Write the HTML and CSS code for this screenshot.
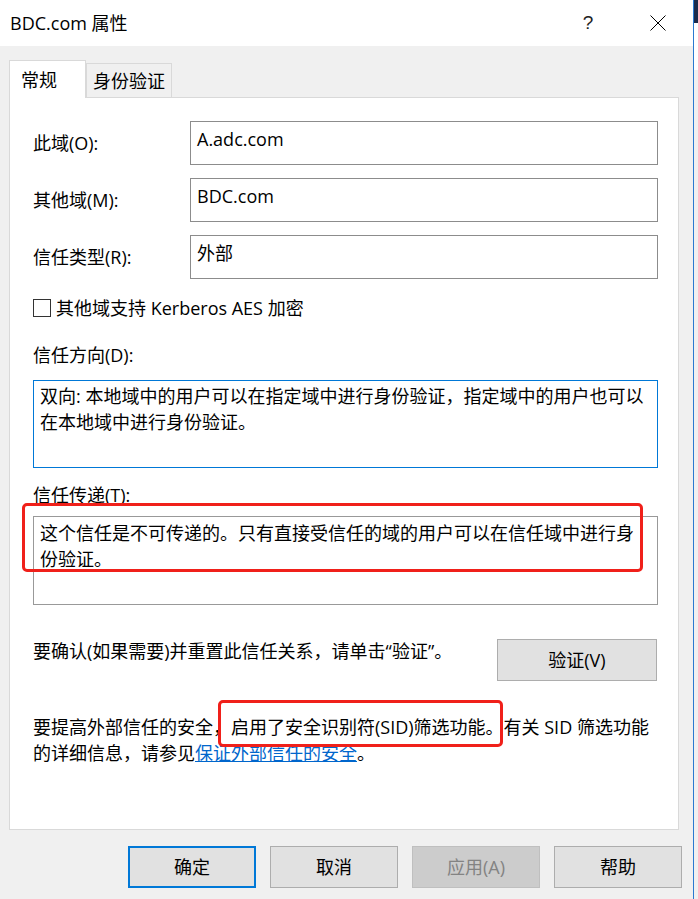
FILE: index.html
```html
<!DOCTYPE html>
<html lang="zh-CN">
<head>
    <meta charset="UTF-8">
    <meta name="viewport" content="width=device-width, initial-scale=1.0">
    <title>BDC.com 属性</title>
    <link rel="stylesheet" href="styles.css">
</head>
<body>
    <div class="window">
        <div class="titlebar">
            <span class="title">BDC.com 属性</span>
            <span class="tb-btn help">?</span>
            <span class="tb-btn close">
                <svg width="16" height="16" viewBox="0 0 16 16">
                    <path d="M0.5 0.5 L15.5 15.5 M15.5 0.5 L0.5 15.5" stroke="#000" stroke-width="1" fill="none"/>
                </svg>
            </span>
        </div>

        <div class="sheet">
            <div class="tabs">
                <div class="tab tab-active">常规</div>
                <div class="tab">身份验证</div>
            </div>

            <div class="panel">
                <div class="fields">
                    <div class="field">
                        <label>此域(O):</label>
                        <div class="textbox">A.adc.com</div>
                    </div>
                    <div class="field">
                        <label>其他域(M):</label>
                        <div class="textbox">BDC.com</div>
                    </div>
                    <div class="field">
                        <label>信任类型(R):</label>
                        <div class="textbox">外部</div>
                    </div>
                </div>

                <div class="check">
                    <span class="checkbox"></span>
                    <span>其他域支持 Kerberos AES 加密</span>
                </div>

                <div class="section-label direction-label">信任方向(D):</div>
                <div class="memo memo-focus">双向: 本地域中的用户可以在指定域中进行身份验证，指定域中的用户也可以在本地域中进行身份验证。</div>

                <div class="section-label transit-label">信任传递(T):</div>
                <div class="memo memo-transit">这个信任是不可传递的。只有直接受信任的域的用户可以在信任域中进行身份验证。</div>

                <div class="verify-row">
                    <span>要确认(如果需要)并重置此信任关系，请单击“验证”。</span>
                    <button class="btn btn-verify">验证(V)</button>
                </div>

                <p class="note">要提高外部信任的安全，启用了安全识别符(SID)筛选功能。有关 SID 筛选功能的详细信息，请参见<a href="#">保证外部信任的安全</a>。</p>

                <!-- annotation boxes drawn over the screenshot -->
                <div class="mark mark-transit"></div>
                <div class="mark mark-sid"></div>
            </div>
        </div>

        <div class="actions">
            <button class="btn btn-default">确定</button>
            <button class="btn">取消</button>
            <button class="btn" disabled>应用(A)</button>
            <button class="btn">帮助</button>
        </div>
    </div>
    <div class="edge"></div>
</body>
</html>
```

FILE: styles.css
```css
:root {
    --face: #f0f0f0;
    --tab-border: #d9d9d9;
    --box-border: #8c8c8c;
    --focus-blue: #0078d7;
    --btn-face: #e1e1e1;
    --btn-border: #adadad;
    --mark-red: #f0201a;
    --link: #0066cc;
}

* {
    box-sizing: border-box;
}

body {
    margin: 0;
    width: 698px;
    height: 899px;
    display: flex;
    overflow: hidden;
    background-color: var(--face);
    color: #000;
    font-family: "Open Sans", "Noto Sans CJK SC", sans-serif;
    font-size: 18px;
    line-height: 26px;
}

.window {
    width: 693px;
    height: 899px;
    background-color: var(--face);
}

.edge {
    width: 5px;
    border-left: 1px solid #2b79d0;
    background: linear-gradient(to bottom, #1c2b4b 0, #1c2b4b 23px, #ffffff 23px, #ffffff 70px, #f0f0f0 70px);
}

/* title bar */
.titlebar {
    height: 46px;
    background-color: #fff;
    display: flex;
    align-items: center;
    padding: 0 12px 0 10px;
}

.title {
    flex: 1;
    font-size: 18px;
}

.tb-btn {
    width: 46px;
    height: 46px;
    display: flex;
    align-items: center;
    justify-content: center;
}

.help {
    margin-right: 24px;
    font-family: "Liberation Sans", sans-serif;
    font-size: 19px;
    font-weight: 300;
    color: #222;
}

/* tabs */
.sheet {
    padding: 14px 0 0 9px;
}

.tabs {
    display: flex;
    align-items: flex-end;
    height: 37px;
}

.tab {
    height: 34px;
    display: flex;
    align-items: center;
    padding: 0 6px;
    border: 1px solid var(--tab-border);
    border-bottom: none;
    background-color: var(--face);
}

.tab-active {
    width: 77px;
    height: 38px;
    margin-bottom: -1px;
    padding: 0 0 0 11px;
    background-color: #fff;
    position: relative;
    z-index: 1;
}

/* page */
.panel {
    position: relative;
    width: 670px;
    height: 733px;
    padding: 23px 20px 0 23px;
    border: 1px solid var(--tab-border);
    background-color: #fff;
}

.fields {
    display: flex;
    flex-direction: column;
    gap: 13px;
}

.field {
    display: grid;
    grid-template-columns: 157px 1fr;
    align-items: center;
}

.textbox {
    height: 44px;
    padding: 4px 6px;
    border: 1px solid var(--box-border);
}

.check {
    display: flex;
    align-items: center;
    gap: 5px;
    margin-top: 16px;
}

.checkbox {
    width: 18px;
    height: 18px;
    border: 1px solid #333;
    background-color: #fff;
}

.direction-label {
    margin-top: 21px;
}

.transit-label {
    margin-top: 14px;
}

.memo {
    padding: 2px 10px 0 6px;
    border: 1px solid #999;
}

.memo-focus {
    height: 88px;
    margin-top: 12px;
    border-color: var(--focus-blue);
}

.memo-transit {
    height: 89px;
    margin-top: 8px;
    padding-top: 3px;
}

.verify-row {
    display: flex;
    justify-content: space-between;
    align-items: flex-start;
    margin-top: 33px;
}

.note {
    margin: 33px 0 0;
}

.note a {
    color: var(--link);
}

/* buttons */
.btn {
    width: 128px;
    height: 42px;
    padding: 0;
    font: inherit;
    color: #000;
    background-color: var(--btn-face);
    border: 1px solid var(--btn-border);
}

.btn-verify {
    width: 160px;
    margin: 1px 1px 0 0;
}

.btn-default {
    border: 2px solid var(--focus-blue);
}

.btn:disabled {
    background-color: #cccccc;
    border-color: #bfbfbf;
    color: #838383;
}

.actions {
    display: flex;
    justify-content: flex-end;
    gap: 14px;
    margin-top: 16px;
    padding-right: 11px;
}

/* red annotation boxes */
.mark {
    position: absolute;
    border: 3px solid var(--mark-red);
    border-radius: 5px;
}

.mark-transit {
    left: 12px;
    top: 405px;
    width: 621px;
    height: 69px;
}

.mark-sid {
    left: 208px;
    top: 602px;
    width: 285px;
    height: 47px;
}
```
